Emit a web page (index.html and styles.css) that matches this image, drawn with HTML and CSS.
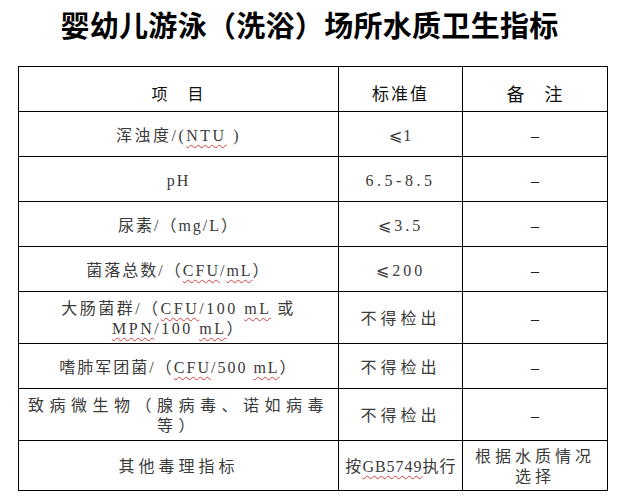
FILE: index.html
```html
<!DOCTYPE html>
<html lang="zh-CN">
<head>
<meta charset="utf-8">
<title>婴幼儿游泳（洗浴）场所水质卫生指标</title>
<link rel="stylesheet" href="styles.css">
</head>
<body>
<h1 class="title">婴幼儿游泳（洗浴）场所水质卫生指标</h1>
<table class="grid">
  <colgroup><col class="c-item"><col class="c-std"><col class="c-note"></colgroup>
  <thead>
    <tr class="r-head">
      <th class="h-item">项　目</th>
      <th class="h-std">标准值</th>
      <th class="h-note">备　注</th>
    </tr>
  </thead>
  <tbody>
    <tr class="r">
      <td class="ls25">浑浊度/(<span class="sp">NTU</span> )</td>
      <td class="num ls1">⩽1</td>
      <td class="dash">–</td>
    </tr>
    <tr class="r">
      <td class="ls2">pH</td>
      <td class="num ls35">6.5-8.5</td>
      <td class="dash">–</td>
    </tr>
    <tr class="r">
      <td class="ls2">尿素/（mg/L）</td>
      <td class="num ls3">⩽3.5</td>
      <td class="dash">–</td>
    </tr>
    <tr class="r">
      <td class="ls2">菌落总数/（<span class="sp">CFU</span>/<span class="sp">mL</span>）</td>
      <td class="num ls3">⩽200</td>
      <td class="dash">–</td>
    </tr>
    <tr class="r-tall">
      <td class="ls25">大肠菌群/（<span class="sp">CFU</span>/100 <span class="sp">mL</span> 或<br><span class="sp">MPN</span>/100 <span class="sp">mL</span>）</td>
      <td class="ls4">不得检出</td>
      <td class="dash">–</td>
    </tr>
    <tr class="r">
      <td class="ls2">嗜肺军团菌/（<span class="sp">CFU</span>/500 <span class="sp">mL</span>）</td>
      <td class="ls4">不得检出</td>
      <td class="dash">–</td>
    </tr>
    <tr class="r-tall">
      <td class="ls55">致病微生物（腺病毒、诺如病毒<br>等）</td>
      <td class="ls4">不得检出</td>
      <td class="dash">–</td>
    </tr>
    <tr class="r-last">
      <td class="ls4">其他毒理指标</td>
      <td class="tight">按<span class="sp">GB5749</span>执行</td>
      <td class="ls4">根据水质情况<br>选择</td>
    </tr>
  </tbody>
</table>
</body>
</html>
```

FILE: styles.css
```css
html, body {
  margin: 0;
  padding: 0;
  background: #ffffff;
}

body {
  font-family: "Liberation Serif", "Noto Sans CJK SC", "DejaVu Sans", serif;
  color: #3a3a3a;
}

.title {
  margin: 0 0 26px 0;
  padding-top: 8px;
  height: 32px;
  line-height: 32px;
  font-family: "Noto Sans CJK SC", sans-serif;
  font-size: 29px;
  font-weight: 700;
  letter-spacing: 0.3px;
  color: #000000;
  text-align: center;
}

.grid {
  margin-left: 18px;
  border-collapse: collapse;
  table-layout: fixed;
  width: 589px;
  font-size: 16px;
}

.c-item { width: 320px; }
.c-std { width: 124px; }
.c-note { width: 145px; }

.grid th,
.grid td {
  border: 1px solid #000000;
  padding: 0 4px;
  text-align: center;
  vertical-align: middle;
  line-height: 20px;
  font-weight: 400;
}

.r-head { height: 45px; }
.r { height: 45px; }
.r-tall { height: 52px; }
.r-last { height: 50px; }

.grid th {
  padding-top: 8px;
  color: #111111;
  font-family: "Noto Sans CJK SC", sans-serif;
}

.h-item { font-size: 16px; letter-spacing: 2px; }
.h-std { font-size: 17px; letter-spacing: 2px; }
.h-note { font-size: 18px; letter-spacing: 1px; }

.grid td { padding-top: 3px; }

.num {
  font-family: "Liberation Serif", "DejaVu Sans", "Noto Sans CJK SC", serif;
}

.dash {
  color: #222222;
}

.grid td.tight {
  padding-left: 1px;
  padding-right: 0;
  letter-spacing: 1px;
  white-space: nowrap;
}

.ls1 { letter-spacing: 1px; padding-left: 5px; }
.ls2 { letter-spacing: 2px; padding-left: 6px; }
.ls25 { letter-spacing: 2.5px; padding-left: 6.5px; }
.ls3 { letter-spacing: 3px; padding-left: 7px; }
.ls35 { letter-spacing: 3.5px; padding-left: 7.5px; }
.ls4 { letter-spacing: 4px; padding-left: 8px; }
.ls55 { letter-spacing: 5.5px; padding-left: 9.5px; }

.sp {
  text-decoration: underline wavy #e03a3a;
  text-decoration-thickness: 1px;
  text-underline-offset: 3px;
}
```
